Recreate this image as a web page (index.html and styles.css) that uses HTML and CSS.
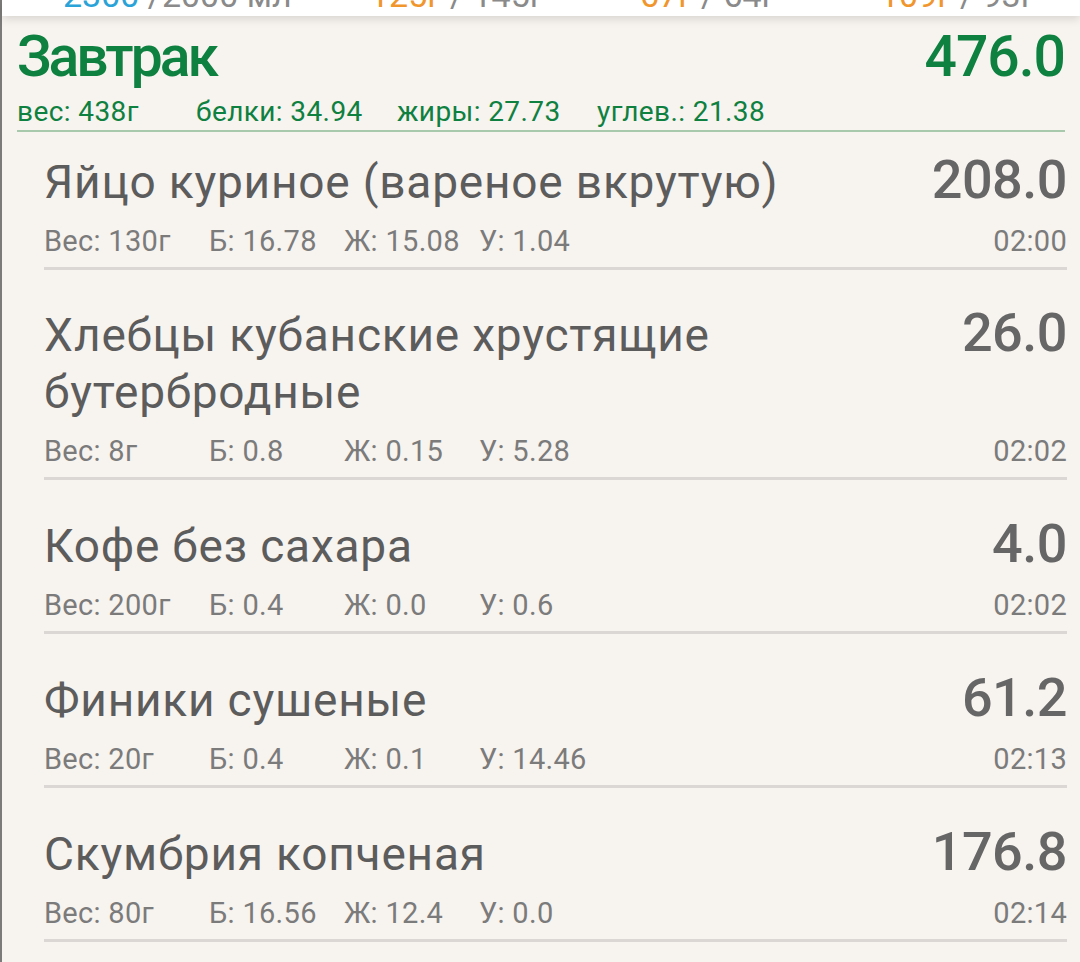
FILE: index.html
```html
<!DOCTYPE html>
<html lang="ru">
<head>
<meta charset="utf-8">
<title>Дневник питания</title>
<link rel="stylesheet" href="styles.css">
</head>
<body>
<div class="app">
  <div class="topbar">
    <div class="stats">
      <span class="stat s1"><span class="water">2300</span> /2000 мл</span>
      <span class="stat s2"><span class="cur">125г</span> / 145г</span>
      <span class="stat s3"><span class="cur">67г</span> / 64г</span>
      <span class="stat s4"><span class="cur">109г</span> / 93г</span>
    </div>
  </div>
  <section class="meal">
    <header class="meal-head">
      <div class="meal-row">
        <h2 class="meal-title">Завтрак</h2>
        <span class="meal-kcal">476.0</span>
      </div>
      <div class="meal-macros">
        <span class="mm mm-w">вес: 438г</span>
        <span class="mm mm-p">белки: 34.94</span>
        <span class="mm mm-f">жиры: 27.73</span>
        <span class="mm mm-c">углев.: 21.38</span>
      </div>
    </header>
    <ul class="items">
      <li class="item">
        <div class="item-row"><span class="item-name">Яйцо куриное (вареное вкрутую)</span><span class="item-kcal">208.0</span></div>
        <div class="item-meta"><span class="m m-w">Вес: 130г</span><span class="m m-p">Б: 16.78</span><span class="m m-f">Ж: 15.08</span><span class="m m-c">У: 1.04</span><span class="time">02:00</span></div>
      </li>
      <li class="item">
        <div class="item-row"><span class="item-name">Хлебцы кубанские хрустящие бутербродные</span><span class="item-kcal">26.0</span></div>
        <div class="item-meta"><span class="m m-w">Вес: 8г</span><span class="m m-p">Б: 0.8</span><span class="m m-f">Ж: 0.15</span><span class="m m-c">У: 5.28</span><span class="time">02:02</span></div>
      </li>
      <li class="item">
        <div class="item-row"><span class="item-name">Кофе без сахара</span><span class="item-kcal">4.0</span></div>
        <div class="item-meta"><span class="m m-w">Вес: 200г</span><span class="m m-p">Б: 0.4</span><span class="m m-f">Ж: 0.0</span><span class="m m-c">У: 0.6</span><span class="time">02:02</span></div>
      </li>
      <li class="item">
        <div class="item-row"><span class="item-name">Финики сушеные</span><span class="item-kcal">61.2</span></div>
        <div class="item-meta"><span class="m m-w">Вес: 20г</span><span class="m m-p">Б: 0.4</span><span class="m m-f">Ж: 0.1</span><span class="m m-c">У: 14.46</span><span class="time">02:13</span></div>
      </li>
      <li class="item">
        <div class="item-row"><span class="item-name">Скумбрия копченая</span><span class="item-kcal">176.8</span></div>
        <div class="item-meta"><span class="m m-w">Вес: 80г</span><span class="m m-p">Б: 16.56</span><span class="m m-f">Ж: 12.4</span><span class="m m-c">У: 0.0</span><span class="time">02:14</span></div>
      </li>
    </ul>
  </section>
</div>
</body>
</html>
```
FILE: styles.css
```css
html, body {
  margin: 0;
  padding: 0;
  background: #f7f3ef;
  overflow: hidden;
}
body {
  font-family: Roboto, "Noto Sans", sans-serif;
  width: 1080px;
  height: 962px;
}
.app {
  height: 962px;
  border-left: 2px solid #7d7b79;
  box-sizing: border-box;
  background: #f7f3ef;
}
.topbar {
  height: 16px;
  background: #ffffff;
  overflow: hidden;
  position: relative;
  z-index: 2;
  box-shadow: 0 3px 10px rgba(0, 0, 0, 0.13);
}
.stats {
  display: flex;
  margin-top: -25px;
  font-size: 34px;
  line-height: 40px;
  color: #8a8a8a;
}
.stat { display: block; }
.s1 { margin-left: 61px; width: 307px; }
.s2 { width: 270px; }
.s3 { width: 240px; }
.water { color: #2aa3d8; }
.cur { color: #f0962c; }

.meal-head {
  padding: 12px 15px 0 15px;
}
.meal-row {
  display: flex;
  justify-content: space-between;
  align-items: baseline;
  height: 58px;
}
.meal-title, .meal-kcal {
  margin: 0;
  font-size: 57px;
  line-height: 58px;
  font-weight: 500;
  color: #0e8040;
  letter-spacing: -1px;
}
.meal-title { letter-spacing: -3px; }
.meal-macros {
  display: flex;
  margin-top: 11px;
  font-size: 28px;
  line-height: 30px;
  letter-spacing: 0.4px;
  color: #0e8040;
  padding-bottom: 3px;
  border-bottom: 2px solid #a9c9ad;
}
.mm-w { width: 179px; }
.mm-p { width: 201px; }
.mm-f { width: 200px; }

.items {
  list-style: none;
  margin: 0;
  padding: 0 13px 0 42px;
}
.item {
  padding-top: 37px;
  border-bottom: 3px solid #dad7d4;
}
.item:first-child { padding-top: 21px; }
.item:nth-child(2) .item-name { line-height: 57px; }
.item-row {
  display: flex;
  justify-content: space-between;
  align-items: baseline;
  gap: 40px;
}
.item-name {
  font-size: 46px;
  line-height: 58px;
  letter-spacing: 0.8px;
  color: #5c5c5c;
}
.item-kcal {
  font-size: 54px;
  line-height: 51px;
  font-weight: 500;
  color: #666666;
  letter-spacing: -0.5px;
}
.item-meta {
  display: flex;
  margin-top: 13px;
  padding-bottom: 9px;
  font-size: 29px;
  line-height: 34px;
  letter-spacing: 0.3px;
  color: #7b7b7b;
}
.m-w { width: 165px; }
.m-p { width: 135px; }
.m-f { width: 135px; }
.time { margin-left: auto; }
```
